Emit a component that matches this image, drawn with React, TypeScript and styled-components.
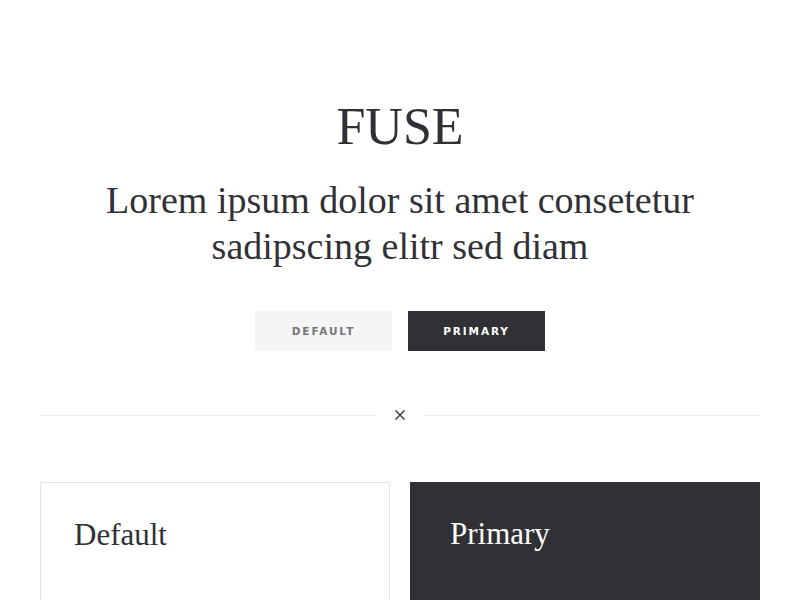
import React from 'react'
import styled, { createGlobalStyle } from 'styled-components'

const GlobalStyle = createGlobalStyle`
  body {
    margin: 0;
    background: #ffffff;
    color: #313035;
    font-family: 'Liberation Serif', serif;
  }
`

const Page = styled.div`
  padding: 96px 40px 0;
  display: flex;
  flex-direction: column;
  align-items: center;
`

const Title = styled.h1`
  margin: 0;
  font-family: 'Liberation Serif', serif;
  font-weight: 400;
  font-size: 52px;
  line-height: 62px;
  color: #313035;
`

const Lead = styled.p`
  margin: 19px 0 0;
  font-family: 'Liberation Serif', serif;
  font-size: 38px;
  line-height: 46px;
  text-align: center;
  color: #313035;
`

const Actions = styled.div`
  margin-top: 42px;
  display: flex;
  gap: 16px;
`

const Button = styled.button<{ $primary?: boolean }>`
  width: 137px;
  height: 40px;
  border: none;
  font-family: 'DejaVu Sans', sans-serif;
  font-weight: 700;
  font-size: 10.5px;
  letter-spacing: 1.9px;
  text-transform: uppercase;
  background: ${({ $primary }) => ($primary ? '#313035' : '#f5f5f5')};
  color: ${({ $primary }) => ($primary ? '#ffffff' : '#76757a')};
  cursor: pointer;
`

const Divider = styled.div`
  align-self: stretch;
  margin-top: 58px;
  display: flex;
  align-items: center;
  gap: 18px;
  &::before,
  &::after {
    content: '';
    flex: 1;
    height: 1px;
    background: #ececec;
  }
`

const Cards = styled.div`
  align-self: stretch;
  margin-top: 61px;
  display: grid;
  grid-template-columns: 1fr 1fr;
  gap: 20px;
`

const Card = styled.div<{ $primary?: boolean }>`
  height: 160px;
  box-sizing: border-box;
  padding: ${({ $primary }) => ($primary ? '32px 40px' : '32px 33px')};
  border: ${({ $primary }) => ($primary ? 'none' : '1px solid #e5e5e5')};
  background: ${({ $primary }) => ($primary ? '#313035' : '#ffffff')};
  color: ${({ $primary }) => ($primary ? '#ffffff' : '#313035')};
`

const CardTitle = styled.h3`
  margin: 0;
  font-family: 'Liberation Serif', serif;
  font-weight: 400;
  font-size: 31px;
  line-height: 40px;
`

const CloseIcon = () => (
  <svg width="12" height="12" viewBox="0 0 12 12">
    <path d="M1.5 1.5L10.5 10.5M10.5 1.5L1.5 10.5" stroke="#313035" strokeWidth="1.4" />
  </svg>
)

export default function App() {
  return (
    <>
      <GlobalStyle />
      <Page>
        <Title>FUSE</Title>
        <Lead>
          Lorem ipsum dolor sit amet consetetur
          <br />
          sadipscing elitr sed diam
        </Lead>
        <Actions>
          <Button>Default</Button>
          <Button $primary>Primary</Button>
        </Actions>
        <Divider>
          <CloseIcon />
        </Divider>
        <Cards>
          <Card>
            <CardTitle>Default</CardTitle>
          </Card>
          <Card $primary>
            <CardTitle>Primary</CardTitle>
          </Card>
        </Cards>
      </Page>
    </>
  )
}
